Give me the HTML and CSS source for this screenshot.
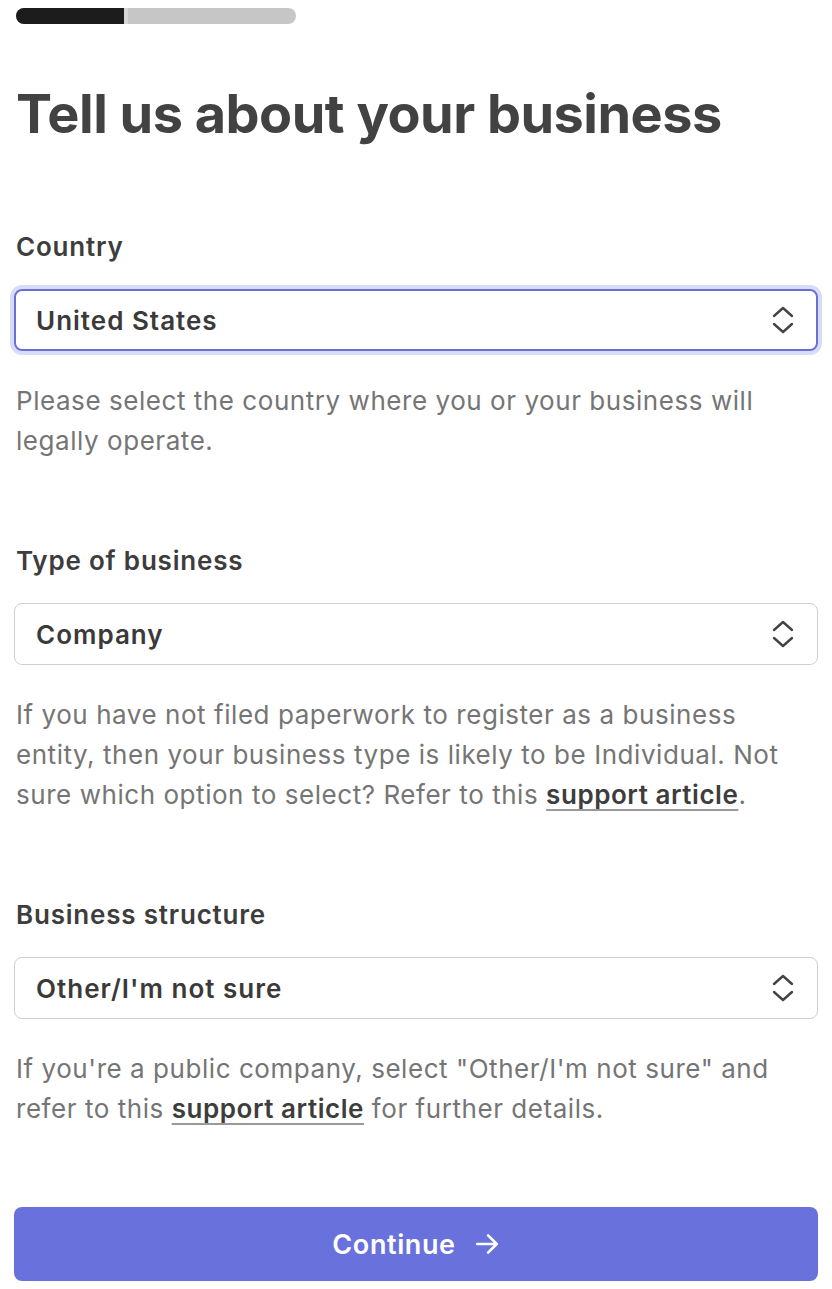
FILE: index.html
```html
<!DOCTYPE html>
<html lang="en">
<head>
  <meta charset="UTF-8" />
  <meta name="viewport" content="width=device-width, initial-scale=1.0"/>
  <title>Tell us about your business</title>
  <link rel="stylesheet" href="styles.css">
</head>
<body>
  <div class="onboarding">
    <div class="progress">
      <div class="progress-fill"></div>
    </div>

    <h1>Tell us about your business</h1>

    <div class="field">
      <label>Country</label>
      <div class="select focused">
        <span>United States</span>
        <svg class="chevrons" viewBox="0 0 24 30" width="24" height="30"><path d="M3 11 L12 3 L21 11 M3 19 L12 27 L21 19" /></svg>
      </div>
      <p class="help">Please select the country where you or your business will legally operate.</p>
    </div>

    <div class="field">
      <label>Type of business</label>
      <div class="select">
        <span>Company</span>
        <svg class="chevrons" viewBox="0 0 24 30" width="24" height="30"><path d="M3 11 L12 3 L21 11 M3 19 L12 27 L21 19" /></svg>
      </div>
      <p class="help">If you have not filed paperwork to register as a business entity, then your business type is likely to be Individual. Not sure which option to select? Refer to this <a href="#">support article</a>.</p>
    </div>

    <div class="field">
      <label>Business structure</label>
      <div class="select">
        <span>Other/I'm not sure</span>
        <svg class="chevrons" viewBox="0 0 24 30" width="24" height="30"><path d="M3 11 L12 3 L21 11 M3 19 L12 27 L21 19" /></svg>
      </div>
      <p class="help">If you're a public company, select "Other/I'm not sure" and refer to this <a href="#">support article</a> for further details.</p>
    </div>

    <button class="continue">Continue <svg viewBox="0 0 24 24" width="26" height="26"><path d="M3 12 H21 M13 4 L21 12 L13 20" /></svg></button>
  </div>
</body>
</html>
```

FILE: styles.css
```css
body {
  margin: 0;
  font-family: Inter, "Liberation Sans", sans-serif;
  background: #fff;
  color: #3d3d3d;
}

.onboarding {
  padding: 8px 14px 0 14px;
}

.progress {
  width: 280px;
  height: 16px;
  margin-left: 2px;
  background: #c6c6c6;
  border-radius: 8px;
  overflow: hidden;
}

.progress-fill {
  width: 108px;
  height: 100%;
  background: #1c1c1c;
  border-right: 4px solid #d6d6d6;
}

h1 {
  font-size: 54px;
  font-weight: 700;
  letter-spacing: -0.5px;
  color: #424242;
  margin: 58px 0 0 2px;
  line-height: 64px;
}

.field {
  margin-top: 85px;
}

.field + .field {
  margin-top: 84px;
}

label {
  display: block;
  font-size: 26px;
  font-weight: 600;
  letter-spacing: 0.8px;
  line-height: 32px;
  margin-left: 2px;
  margin-bottom: 26px;
}

.select {
  display: flex;
  align-items: center;
  justify-content: space-between;
  height: 60px;
  padding: 0 22px 0 21px;
  border: 1px solid #cfcfcf;
  border-radius: 8px;
  font-size: 26px;
  font-weight: 600;
  letter-spacing: 1px;
  color: #3a3a3a;
}

.select.focused {
  border: 2px solid #6870d6;
  height: 58px;
  padding: 0 21px 0 20px;
  box-shadow: 0 0 0 4px #d9dcf6;
}

.chevrons {
  fill: none;
  stroke: #444;
  stroke-width: 2.4;
  stroke-linecap: round;
  stroke-linejoin: round;
}

.help {
  margin: 30px 0 0 2px;
  font-size: 26px;
  letter-spacing: 0.55px;
  line-height: 40px;
  color: #757575;
}

.help a {
  color: #3d3d3d;
  font-weight: 600;
  text-decoration: underline;
  text-decoration-color: #9a9a9a;
  text-underline-offset: 5px;
  text-decoration-thickness: 2px;
}

.continue {
  display: flex;
  align-items: center;
  justify-content: center;
  gap: 18px;
  width: 100%;
  height: 74px;
  margin-top: 78px;
  border: none;
  border-radius: 8px;
  background: #6972dc;
  color: #fff;
  font-family: inherit;
  font-size: 27px;
  font-weight: 600;
  letter-spacing: 0.6px;
  cursor: pointer;
}

.continue svg {
  fill: none;
  stroke: #fff;
  stroke-width: 2.4;
  stroke-linecap: round;
  stroke-linejoin: round;
}
```
